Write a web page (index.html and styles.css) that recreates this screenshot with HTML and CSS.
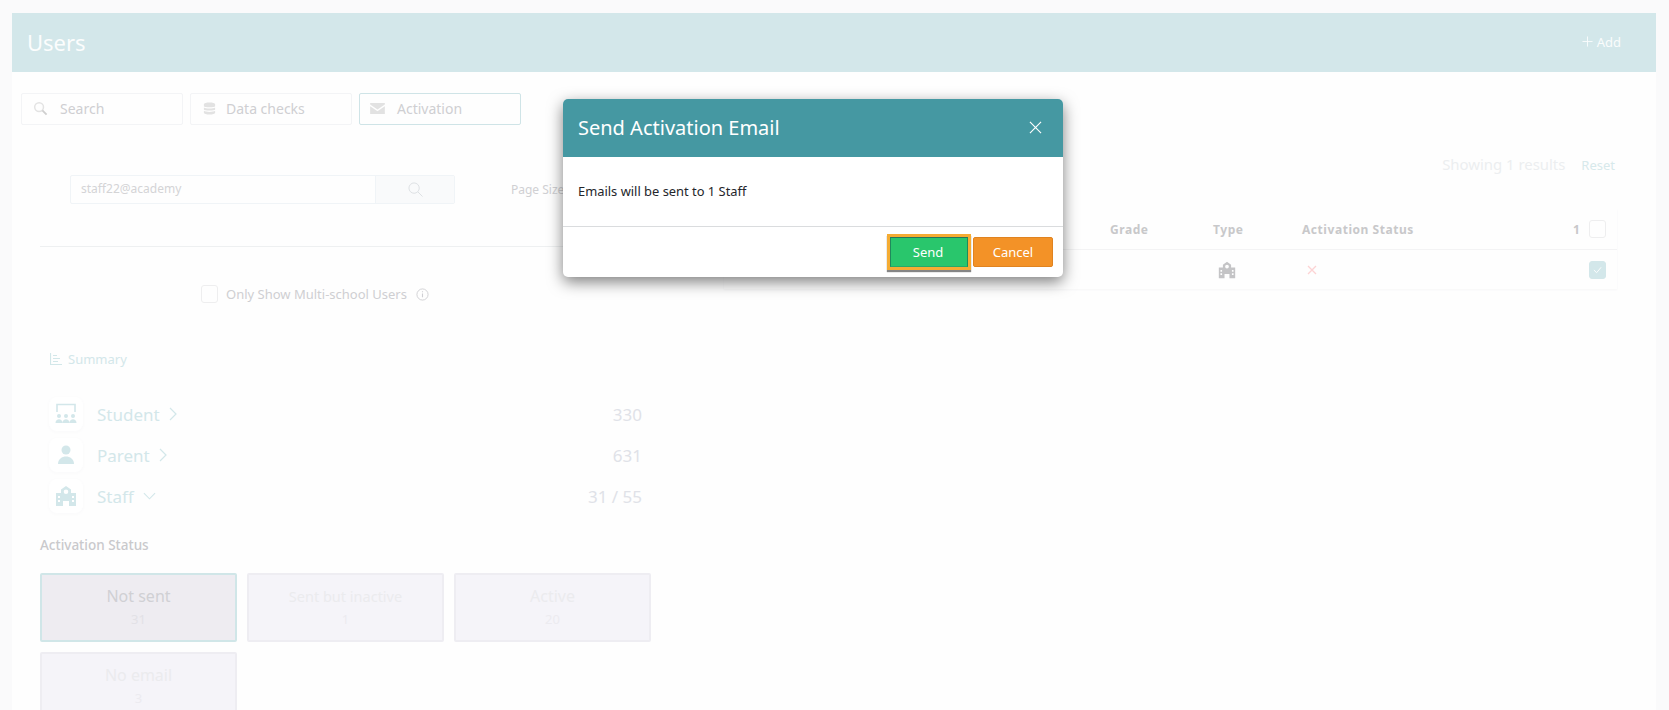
FILE: index.html
```html
<!DOCTYPE html>
<html lang="en">
<head>
<meta charset="utf-8">
<title>Users</title>
<link rel="stylesheet" href="styles.css">
</head>
<body>
<div class="page">
  <div class="panel">
    <header class="head">
      <h1 class="head-title">Users</h1>
      <button class="add"><svg class="add-icon" viewBox="0 0 12 12"><path d="M6 .5v11M.5 6h11"/></svg>Add</button>
    </header>
    <div class="tabs">
      <div class="tab"><svg class="tab-icon" viewBox="0 0 16 16"><circle cx="6.5" cy="6.5" r="4.7" fill="none" stroke="#e3e3e3" stroke-width="1.6"/><path d="M10 10l4.5 4.5" stroke="#cfcfcf" stroke-width="2"/></svg><span class="tab-search">Search</span></div>
      <div class="tab"><svg class="tab-icon" viewBox="0 0 16 16"><path d="M2 3.5C2 1 14 1 14 3.500V5.500C14 7 2 7 2 5.500zM2 7c2 1.500 10 1.500 12 0v2c0 1.500-12 1.500-12 0zM2 10.500c2 1.500 10 1.500 12 0v2C14 15 2 15 2 12.500z" fill="#e2e2e2"/></svg><span class="tab-data">Data checks</span></div>
      <div class="tab tab-on"><svg class="tab-mail" viewBox="0 0 16 12"><path d="M0 0h16v1.500L8 7 0 1.500zM0 3.500l8 5.500 8-5.500V12H0z" fill="#e2e2e2"/></svg><span class="tab-act">Activation</span></div>
    </div>
    <div class="content">
      <section class="left">
        <div class="filter">
          <div class="finder">
            <div class="finder-input">staff22@academy</div>
            <div class="finder-btn"><svg class="finder-icon" viewBox="0 0 16 16"><circle cx="6.500" cy="6.500" r="5.500" fill="none" stroke="#dcdfe2" stroke-width="1"/><path d="M10.500 10.500l5 5" stroke="#dcdfe2"/></svg></div>
          </div>
          <span class="page-size">Page Size</span>
        </div>
        <div class="rule"></div>
        <label class="multi">
          <span class="box"></span>
          <span class="multi-text">Only Show Multi-school Users</span>
          <svg class="info" viewBox="0 0 14 14"><circle cx="7" cy="7" r="6" fill="none" stroke="#cfcfd3"/><path d="M7 6v4M7 3.500v1.200" stroke="#cfcfd3" stroke-width="1.200"/></svg>
        </label>
        <div class="summary"><svg class="summary-icon" viewBox="0 0 12 12"><path d="M.5 0v11.500H12M3 2.500h4M3 5.500h7M3 8.500h5" fill="none" stroke="#d2e7e9" stroke-width="1.200"/></svg>Summary</div>
        <div class="stats">
          <div class="stat">
            <span class="stat-icon"><svg viewBox="0 0 22 22"><path d="M2 9V1.500h18V9" fill="none" stroke="#d3e7ea" stroke-width="1.600"/><g fill="#d3e7ea"><circle cx="4" cy="13" r="2"/><circle cx="11" cy="13" r="2"/><circle cx="18" cy="13" r="2"/><path d="M.5 20c0-5 7-5 7 0zM7.500 20c0-5 7-5 7 0zM14.500 20c0-5 7-5 7 0z"/></g></svg></span>
            <span class="stat-name">Student</span>
            <svg class="chev" viewBox="0 0 8 14"><path d="M1 1l6 6-6 6"/></svg>
            <span class="stat-num">330</span>
          </div>
          <div class="stat">
            <span class="stat-icon"><svg viewBox="0 0 22 22"><circle cx="11" cy="6" r="4.500" fill="#d3e7ea"/><path d="M3 20c0-10 16-10 16 0z" fill="#d3e7ea"/></svg></span>
            <span class="stat-name">Parent</span>
            <svg class="chev" viewBox="0 0 8 14"><path d="M1 1l6 6-6 6"/></svg>
            <span class="stat-num">631</span>
          </div>
          <div class="stat">
            <span class="stat-icon"><svg viewBox="0 0 22 22"><path fill="#d3e7ea" fill-rule="evenodd" d="M11 1l5 3.500V8h5v13h-7v-5H8v5H1V8h5V4.500zM11 4.500a2.300 2.300 0 100 4.600 2.300 2.300 0 000-4.600zM3 11v2h2v-2zM3 15v2h2v-2zM17 11v2h2v-2zM17 15v2h2v-2z"/></svg></span>
            <span class="stat-name">Staff</span>
            <svg class="chev-down" viewBox="0 0 14 8"><path d="M1 1l6 6 6-6"/></svg>
            <span class="stat-num">31 / 55</span>
          </div>
        </div>
        <h2 class="act-title">Activation Status</h2>
        <div class="tiles">
          <div class="tile tile-on"><span class="tile-name">Not sent</span><span class="tile-num">31</span></div>
          <div class="tile"><span class="tile-name tile-long">Sent but inactive</span><span class="tile-num">1</span></div>
          <div class="tile"><span class="tile-name">Active</span><span class="tile-num">20</span></div>
          <div class="tile"><span class="tile-name">No email</span><span class="tile-num">3</span></div>
        </div>
      </section>
      <section class="right">
        <div class="results"><span class="showing">Showing 1 results</span><span class="reset">Reset</span></div>
        <div class="table">
          <div class="row row-head">
            <span class="col-grade">Grade</span>
            <span class="col-type">Type</span>
            <span class="col-status">Activation Status</span>
            <span class="col-count">1</span>
            <span class="box"></span>
          </div>
          <div class="row">
            <span class="col-grade"></span>
            <span class="col-type"><svg class="type-icon" viewBox="0 0 22 22"><path fill="#c4c4c6" fill-rule="evenodd" d="M11 1l5 3.500V8h5v13h-7v-5H8v5H1V8h5V4.500zM11 4.500a2.300 2.300 0 100 4.600 2.300 2.300 0 000-4.600zM3 11v2h2v-2zM3 15v2h2v-2zM17 11v2h2v-2zM17 15v2h2v-2z"/></svg></span>
            <span class="col-status"><svg class="cross" viewBox="0 0 10 10"><path d="M1 1l8 8M9 1l-8 8"/></svg></span>
            <span class="col-count"></span>
            <span class="box box-on"><svg class="tick" viewBox="0 0 10 8"><path d="M1 4l3 3 5-6"/></svg></span>
          </div>
        </div>
      </section>
    </div>
  </div>
</div>
<div class="modal">
  <div class="modal-head">
    <h3 class="modal-title">Send Activation Email</h3>
    <svg class="modal-close" viewBox="0 0 14 14"><path d="M1 1l12 12M13 1L1 13"/></svg>
  </div>
  <div class="modal-body">Emails will be sent to 1 Staff</div>
  <div class="modal-foot">
    <button class="btn btn-send">Send</button>
    <button class="btn btn-cancel">Cancel</button>
  </div>
</div>
</body>
</html>
```
FILE: styles.css
```css
* { box-sizing: border-box; }
html, body { margin: 0; height: 710px; overflow: hidden; }
body { font-family: "Noto Sans", "Open Sans", sans-serif; background: #fafafb; color: #c8c8cb; }
.page { padding: 13px 13px 0 12px; height: 710px; }
.panel { background: #fefefe; height: 697px; overflow: hidden; }
.head { height: 59px; background: #d3e7ea; display: flex; align-items: center; justify-content: space-between; padding: 0 35px 2px 15px; }
.head-title { margin: 0; font-size: 22px; font-weight: 400; color: #fcfdfd; }
.add { display: flex; align-items: center; gap: 4px; border: 0; background: none; padding: 0; font: 400 13px "Noto Sans", sans-serif; color: #fafcfc; }
.add-icon { width: 11px; height: 11px; fill: none; stroke: #fafcfc; }
.tabs { display: flex; gap: 7px; margin-top: 21px; padding-left: 9px; }
.tab { width: 162px; height: 32px; display: flex; align-items: center; border: 1px solid #f3f4f6; border-radius: 2px; padding: 0 0 2px 10px; font-size: 14px; color: #cfcfd2; }
.tab-on { border-color: #cfe4e7; }
.tab-icon { width: 15px; height: 15px; flex: none; margin-left: 1px; }
.tab-mail { width: 15px; height: 11px; flex: none; }
.tab-search { margin-left: 12px; }
.tab-data { margin-left: 9px; }
.tab-act { margin-left: 12px; }
.content { display: flex; padding-left: 28px; }
.left { width: 660px; flex: none; }
.filter { display: flex; align-items: center; margin-top: 50px; padding-left: 30px; }
.finder { display: flex; width: 385px; height: 29px; border: 1px solid #f0f4f7; border-radius: 2px; }
.finder-input { width: 305px; border-right: 1px solid #f0f4f7; padding-left: 10px; font-size: 12px; line-height: 25px; color: #d4d4d6; }
.finder-btn { flex: 1; background: #f9fafb; display: flex; align-items: center; justify-content: center; }
.finder-icon { width: 15px; height: 15px; }
.page-size { margin-left: 56px; font-size: 12px; color: #d0d0d3; white-space: nowrap; }
.rule { height: 1px; background: #eef0f1; margin-top: 42px; width: 690px; }
.multi { display: flex; align-items: center; margin-top: 38px; padding-left: 161px; font-size: 13px; color: #cfcfd2; }
.box { width: 17px; height: 18px; flex: none; border: 1px solid #eeeeef; border-radius: 3px; background: #fefefe; display: flex; align-items: center; justify-content: center; }
.box-on { background: #d3e7ea; border-color: #d3e7ea; }
.multi-text { margin-left: 8px; }
.info { width: 13px; height: 13px; margin-left: 9px; }
.summary { display: flex; align-items: center; gap: 6px; margin-top: 47px; padding-left: 10px; font-size: 13px; color: #d3e7ea; }
.summary-icon { width: 12px; height: 12px; }
.stats { display: flex; flex-direction: column; gap: 7px; margin-top: 29px; padding: 0 10px 0 9px; width: 612px; }
.stat { display: flex; align-items: center; height: 34px; }
.stat-icon { width: 34px; height: 34px; flex: none; display: flex; align-items: center; justify-content: center; border-radius: 8px; box-shadow: 0 1px 4px #f9f9fa; background: #fff; }
.stat-icon svg { width: 22px; height: 22px; }
.stat-name { margin-left: 14px; font-size: 17px; color: #d3e7ea; }
.chev { width: 8px; height: 14px; margin-left: 9px; fill: none; stroke: #d3e7ea; stroke-width: 1.200; }
.chev-down { width: 13px; height: 8px; margin-left: 9px; fill: none; stroke: #d3e7ea; stroke-width: 1.200; }
.stat-num { margin-left: auto; font-size: 17px; color: #e0e2e8; }
.act-title { margin: 23px 0 0; font-size: 13.500px; font-weight: 500; color: #c9c9cc; line-height: 18px; }
.tiles { display: grid; grid-template-columns: repeat(3, 197px); gap: 10px; margin-top: 19px; }
.tile { height: 69px; border: 2px solid #eeedf2; border-radius: 2px; background: #f5f4f9; display: flex; flex-direction: column; align-items: center; padding-top: 9px; color: #ebebee; }
.tile-on { background: #eeecf1; border-color: #d0e6e8; color: #d0d0d4; }
.tile-name { font-size: 16px; line-height: 24px; }
.tile-long { font-size: 14.500px; }
.tile-num { font-size: 13px; line-height: 23px; color: #ecebf0; }
.tile-on .tile-num { color: #e2e1e6; }
.right { margin-left: 24px; width: 893px; flex: none; }
.results { display: flex; justify-content: flex-end; align-items: baseline; gap: 16px; margin-top: 29px; padding-right: 2px; }
.showing { font-size: 14.900px; color: #eceef0; }
.reset { font-size: 13px; color: #d7e9eb; }
.table { margin-top: 35px; box-shadow: 0 1px 2px #f6f6f7; }
.row { display: flex; align-items: center; height: 40px; font-size: 12px; font-weight: 700; letter-spacing: .55px; color: #c8c8ca; }
.row + .row { border-top: 1px solid #f3f3f4; }
.col-grade { margin-left: 386px; width: 103px; flex: none; }
.col-type { width: 89px; flex: none; display: flex; }
.col-status { width: 271px; flex: none; display: flex; }
.col-count { width: 16px; flex: none; }
.type-icon { width: 18px; height: 18px; margin-left: 5px; }
.cross { width: 10px; height: 10px; margin-left: 5px; fill: none; stroke: #fdd3d4; stroke-width: 1.300; }
.tick { width: 9px; height: 8px; fill: none; stroke: #fff; stroke-width: 1; }
.modal { position: absolute; left: 563px; top: 99px; width: 500px; height: 178px; background: #fff; border-radius: 5px; overflow: hidden; box-shadow: 0 5px 15px rgba(0,0,0,.5); display: flex; flex-direction: column; }
.modal-head { height: 58px; flex: none; background: #4598a2; display: flex; align-items: center; justify-content: space-between; padding: 0 15px 2px; }
.modal-title { margin: 0; font-size: 20px; font-weight: 400; color: #fff; }
.modal-close { width: 13px; height: 13px; fill: none; stroke: #fff; stroke-width: 1.200; margin-right: 6px; }
.modal-body { height: 70px; flex: none; padding: 25px 15px 0; font-size: 12.900px; line-height: 18px; color: #24262b; border-bottom: 1px solid #dadcde; }
.modal-foot { flex: 1; display: flex; justify-content: flex-end; align-items: center; gap: 2px; padding: 0 10px 0 0; }
.btn { height: 30px; border-radius: 2px; border: 1px solid transparent; font: 400 13px "Noto Sans", sans-serif; color: #fff; padding: 0; }
.btn-send { width: 78px; border-radius: 0; background: #29c66c; border-color: #27745c #1f8a5c #29a868; outline: 3px solid #f5ac33; box-shadow: 0 2px 1px 3px #858585; margin-right: 3px; padding-right: 2px; }
.btn-cancel { width: 80px; background: #f39227; border-color: #e08320; }
```
